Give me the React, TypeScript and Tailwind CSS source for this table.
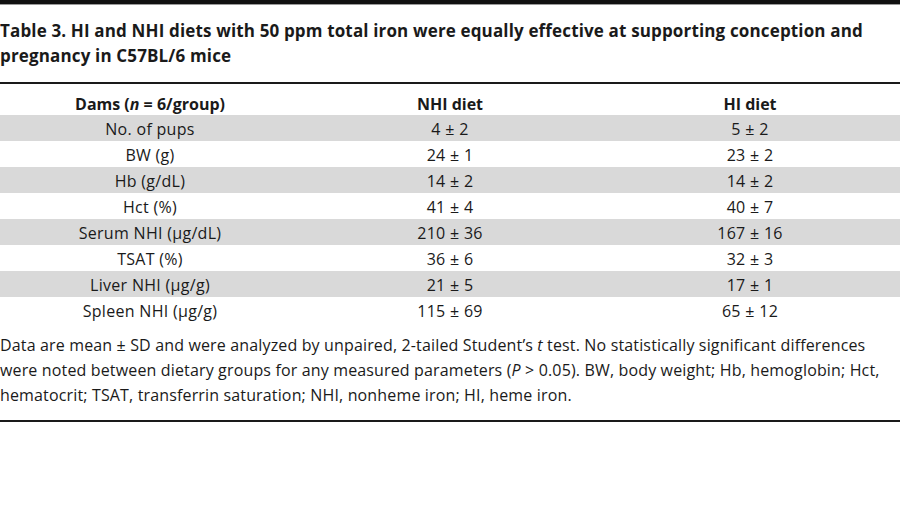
const rows: [string, string, string][] = [
  ["No. of pups", "4 ± 2", "5 ± 2"],
  ["BW (g)", "24 ± 1", "23 ± 2"],
  ["Hb (g/dL)", "14 ± 2", "14 ± 2"],
  ["Hct (%)", "41 ± 4", "40 ± 7"],
  ["Serum NHI (μg/dL)", "210 ± 36", "167 ± 16"],
  ["TSAT (%)", "36 ± 6", "32 ± 3"],
  ["Liver NHI (μg/g)", "21 ± 5", "17 ± 1"],
  ["Spleen NHI (μg/g)", "115 ± 69", "65 ± 12"],
];

export default function App() {
  return (
    <div className="w-[900px] h-[521px] bg-white text-[#1a1a1a] font-['Open_Sans',sans-serif] overflow-hidden">
      <div className="h-[4px] bg-[#111]" />
      <div className="h-px bg-[#9a9a9a]" />
      <h1 className="pt-[13px] text-[17px] leading-[25px] font-bold tracking-[0.15px] whitespace-nowrap">
        Table 3. HI and NHI diets with 50 ppm total iron were equally effective at supporting conception and
        <br />
        pregnancy in C57BL/6 mice
      </h1>
      <table className="mt-[14px] w-full border-t-2 border-[#1a1a1a] text-[16px] border-collapse">
        <thead>
          <tr className="h-[32px]">
            <th className="w-[300px] font-bold p-0 pt-[8px] leading-[22px]">
              Dams (<i>n</i> = 6/group)
            </th>
            <th className="w-[300px] font-bold p-0 pt-[8px] leading-[22px]">NHI diet</th>
            <th className="w-[300px] font-bold p-0 pt-[8px] leading-[22px]">HI diet</th>
          </tr>
        </thead>
        <tbody className="tracking-[0.3px]">
          {rows.map(([label, nhi, hi], i) => (
            <tr key={label} className={i % 2 === 0 ? "h-[26px] bg-[#d9d9d9]" : "h-[26px]"}>
              <td className="text-center p-0 pt-[2px]">{label}</td>
              <td className="text-center p-0 pt-[2px]">{nhi}</td>
              <td className="text-center p-0 pt-[2px]">{hi}</td>
            </tr>
          ))}
        </tbody>
      </table>
      <p className="mt-[10px] text-[16px] leading-[25px] tracking-[0.15px] whitespace-nowrap">
        Data are mean ± SD and were analyzed by unpaired, 2-tailed Student’s <i>t</i> test. No statistically significant differences
        <br />
        were noted between dietary groups for any measured parameters (<i>P</i> &gt; 0.05). BW, body weight; Hb, hemoglobin; Hct,
        <br />
        hematocrit; TSAT, transferrin saturation; NHI, nonheme iron; HI, heme iron.
      </p>
      <div className="mt-[12px] h-[2px] bg-[#1a1a1a]" />
    </div>
  );
}
